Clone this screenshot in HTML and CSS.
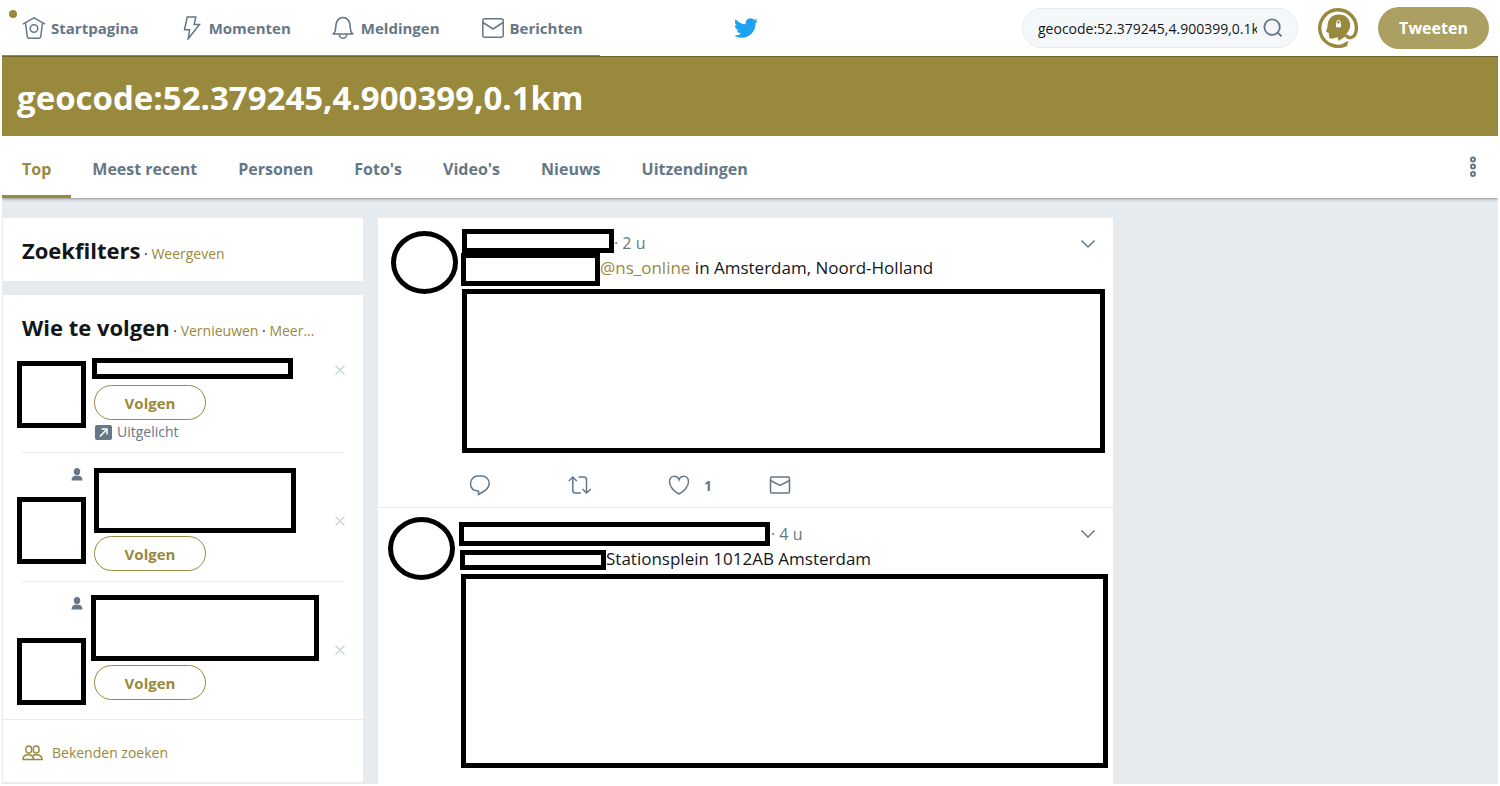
FILE: index.html
```html
<!DOCTYPE html>
<html lang="nl">
<head>
<meta charset="utf-8">
<meta name="viewport" content="width=device-width, initial-scale=1">
<title>geocode:52.379245,4.900399,0.1km</title>
<link rel="stylesheet" href="styles.css">
</head>
<body>
<svg class="sprite" aria-hidden="true">
  <symbol id="i-mail" viewBox="0 0 24 24"><rect x="1.8" y="2.8" width="20.4" height="18.4" rx="2"/><path d="M2 6.5l10 6.5 10-6.5"/></symbol>
  <symbol id="i-caret" viewBox="0 0 16 10"><path d="M1.5 1.5L8 8l6.500-6.500"/></symbol>
  <symbol id="i-close" viewBox="0 0 12 12"><path d="M1.500 1.500l9 9M10.500 1.500l-9 9"/></symbol>
  <symbol id="i-person" viewBox="0 0 12 13"><ellipse cx="6" cy="3.600" rx="3.200" ry="3.600"/><path d="M.5 12.500C.5 9.800 2 8.200 4 7.800h4c2 .4 3.500 2 3.500 4.700z"/></symbol>
</svg>
<div class="page">
  <header class="topbar">
    <nav class="mainnav" aria-label="Hoofdnavigatie">
      <a class="navlink navlink-new" href="#"><svg class="icon24" viewBox="0 0 24 24"><path d="M.8 8.200L12 1.800l11.200 6.400M3.500 7l1.700 13.200q.2 2 2 2h9.600q1.800 0 2-2L20.500 7"/><circle cx="12" cy="12.500" r="3.800"/></svg>Startpagina</a>
      <a class="navlink" href="#"><svg class="icon24" viewBox="0 0 24 24"><path d="M7.200 1h8.600l-1.600 7.500h5.300L8.200 22.800l1.400-9H4.500z"/></svg>Momenten</a>
      <a class="navlink" href="#"><svg class="icon24" viewBox="0 0 24 24"><path d="M.8 18c1.900-1 2.600-2.200 2.700-4.800C3.700 6.500 5.500 1.500 11 1.500s7.300 5 7.500 11.700c.1 2.600.8 3.800 2.700 4.800zM7.300 18.500c.3 2.300 1.600 3.800 3.700 3.800s3.400-1.500 3.700-3.800"/></svg>Meldingen</a>
      <a class="navlink" href="#"><svg class="icon24"><use href="#i-mail"/></svg>Berichten</a>
    </nav>
    <a class="logo" href="#" aria-label="Twitter"><svg viewBox="0 0 24 20"><path d="M23.950 2.570a10 10 0 0 1-2.820.78 4.960 4.960 0 0 0 2.160-2.730c-.95.560-2 .96-3.130 1.190a4.920 4.920 0 0 0-8.380 4.480C7.690 6.090 4.070 4.130 1.640 1.160a4.820 4.820 0 0 0-.67 2.480c0 1.710.87 3.210 2.190 4.100a4.900 4.900 0 0 1-2.230-.62v.06a4.920 4.920 0 0 0 3.950 4.830 5 5 0 0 1-2.210.08 4.940 4.940 0 0 0 4.600 3.420A9.870 9.870 0 0 1 0 17.540a13.990 13.990 0 0 0 7.560 2.210c9.050 0 14-7.500 14-13.980 0-.21 0-.42-.02-.63a9.940 9.940 0 0 0 2.460-2.550z"/></svg></a>
    <div class="tools">
      <form class="search" role="search">
        <input type="text" aria-label="Zoeken op Twitter" value="geocode:52.379245,4.900399,0.1km">
        <button type="button" class="search-btn" aria-label="Zoeken"><svg viewBox="0 0 22 22"><circle cx="10" cy="10" r="8.500"/><path d="M16.200 16.200l4.300 4"/></svg></button>
      </form>
      <a class="profile" href="#" aria-label="Profiel"><svg viewBox="0 0 40 40"><path class="a-ring" d="M29 36A18.300 18.300 0 1 1 37.900 24C36.500 30 30.500 31.500 28 27"/><path class="a-fill" d="M9.500 18.500C9.500 11 14 6.500 21 6.500c6.800 0 11.200 4.800 11.200 10.500 0 5.800-3.900 8-4.900 11.500l-6.800 4.500-.6-3.800-6.300 1.600c-1.900.3-2.500-.8-2.500-2.200l-.5-3.900-2-.8c-.9-.4-.7-1 0-1.900z"/><path class="a-tail" d="M25 37l5-3"/><rect class="a-white" x="18" y="15.500" width="5" height="3.800"/><path class="a-lock" d="M18.900 16v-2a1.600 1.600 0 0 1 3.200 0v2"/></svg></a>
      <button type="button" class="tweet-btn">Tweeten</button>
    </div>
  </header>

  <section class="hero"><h1>geocode:52.379245,4.900399,0.1km</h1></section>

  <nav class="tabs" aria-label="Resultaten">
    <a class="tab active" href="#">Top</a>
    <a class="tab" href="#">Meest recent</a>
    <a class="tab" href="#">Personen</a>
    <a class="tab" href="#">Foto's</a>
    <a class="tab" href="#">Video's</a>
    <a class="tab" href="#">Nieuws</a>
    <a class="tab" href="#">Uitzendingen</a>
    <button type="button" class="more" aria-label="Meer opties"><svg viewBox="0 0 8 22"><circle cx="4" cy="3.500" r="2"/><circle cx="4" cy="10.500" r="2"/><circle cx="4" cy="18" r="2"/></svg></button>
  </nav>

  <main class="main">
    <aside class="sidebar">
      <section class="card filters">
        <h2>Zoekfilters</h2><span class="links"> · <a href="#">Weergeven</a></span>
      </section>
      <section class="card">
        <div class="card-head"><h2>Wie te volgen</h2><span class="links"> · <a href="#">Vernieuwen</a> · <a href="#">Meer...</a></span></div>
        <ul class="people">
          <li class="person person-a">
            <div class="pic"><div class="mask avatar"></div></div>
            <div class="info">
              <div class="mask name"></div>
              <button type="button" class="follow">Volgen</button>
              <p class="promoted"><svg viewBox="0 0 17 15"><rect width="17" height="15" rx="2"/><path d="M5 11.500l6.500-7M6.500 4h5.500v5.500"/></svg>Uitgelicht</p>
            </div>
            <button type="button" class="close" aria-label="Verbergen"><svg><use href="#i-close"/></svg></button>
          </li>
          <li class="person person-b">
            <div class="pic"><svg class="who"><use href="#i-person"/></svg><div class="mask avatar"></div></div>
            <div class="info">
              <div class="mask name"></div>
              <button type="button" class="follow">Volgen</button>
            </div>
            <button type="button" class="close" aria-label="Verbergen"><svg><use href="#i-close"/></svg></button>
          </li>
          <li class="person person-c">
            <div class="pic"><svg class="who"><use href="#i-person"/></svg><div class="mask avatar"></div></div>
            <div class="info">
              <div class="mask name"></div>
              <button type="button" class="follow">Volgen</button>
            </div>
            <button type="button" class="close" aria-label="Verbergen"><svg><use href="#i-close"/></svg></button>
          </li>
        </ul>
        <a class="find" href="#"><svg viewBox="0 0 21 16"><ellipse cx="6.800" cy="4.500" rx="2.900" ry="3.600"/><ellipse cx="14.200" cy="4.500" rx="2.900" ry="3.600"/><path d="M1 14.500c0-3 2-4.800 5.200-4.800s5.300 1.800 5.300 4.800zM11 10.500c.9-.5 2-.8 3.300-.8 3.500 0 5.700 1.800 5.700 4.800h-8"/></svg>Bekenden zoeken</a>
      </section>
    </aside>

    <section class="timeline">
      <article class="tweet tweet-a">
        <div class="mask face"></div>
        <div class="body">
          <div class="head"><div class="mask author"></div><span class="time">· 2 u</span><button type="button" class="caret" aria-label="Meer"><svg><use href="#i-caret"/></svg></button></div>
          <div class="line"><div class="mask word"></div><p><a href="#">@ns_online</a> in Amsterdam, Noord-Holland</p></div>
          <div class="mask media"></div>
          <div class="actions">
            <button type="button" aria-label="Beantwoorden"><svg viewBox="0 0 24 24"><path d="M10.500 21.500v-3.600C5 17.700 2.500 14.500 2.500 10.700c0-4.400 3-7.700 7.500-7.700h3.500c4.500 0 7.800 3.300 7.800 7.500 0 5-4.800 7.800-10.800 11z"/></svg></button>
            <button type="button" aria-label="Retweeten"><svg viewBox="0 0 24 24"><path d="M.8 8L4.800 4l4 4M4.800 4.500v13q0 2.500 2.500 2.500h5.500M10.500 4H16q2.500 0 2.500 2.500v13M14.500 16l4 4 4.300-4"/></svg></button>
            <button type="button" aria-label="Vind ik leuk"><svg viewBox="0 0 24 24"><path d="M11 21C6 18.500 1.500 13.500 1.500 8.700c0-3.200 2-5.500 4.700-5.500 2.200 0 4 1.300 4.800 3.600.8-2.300 2.600-3.600 4.800-3.600 2.700 0 4.700 2.300 4.700 5.500C20.500 13.500 16 18.500 11 21z"/></svg><span>1</span></button>
            <button type="button" aria-label="Direct bericht"><svg viewBox="0 0 24 24"><rect x="2.500" y="4" width="19" height="16" rx="1.500"/><path d="M2.500 7.500l9.500 5 9.500-5"/></svg></button>
          </div>
        </div>
      </article>
      <article class="tweet tweet-b">
        <div class="mask face"></div>
        <div class="body">
          <div class="head"><div class="mask author"></div><span class="time">· 4 u</span><button type="button" class="caret" aria-label="Meer"><svg><use href="#i-caret"/></svg></button></div>
          <div class="line"><div class="mask word"></div><p>Stationsplein 1012AB Amsterdam</p></div>
          <div class="mask media"></div>
        </div>
      </article>
    </section>
  </main>
</div>
</body>
</html>
```
FILE: styles.css
```css
:root {
  --accent: #98893d;
  --grey: #657786;
  --ink: #14171a;
  --wash: #e6ebef;
}
* { box-sizing: border-box; }
body {
  margin: 0;
  background: #fff;
  color: var(--ink);
  font-family: "Open Sans", "Noto Sans", sans-serif;
  font-size: 15px;
}
h1, h2, p, ul { margin: 0; padding: 0; }
a { color: var(--accent); text-decoration: none; }
button { margin: 0; padding: 0; border: 0; background: none; font-family: inherit; cursor: pointer; }
svg { display: block; flex: none; fill: none; stroke: currentColor; stroke-width: 1.5; }
.sprite { display: none; }
.page { padding: 0 2px 2px; }
.mask { flex: none; background: #fff; border: 5px solid #000; }

/* Top bar */
.topbar { display: grid; grid-template-columns: 1fr auto 1fr; align-items: center; height: 56px; padding-right: 9px; }
.mainnav { display: flex; align-items: center; gap: 41px; width: 598px; height: 56px; padding-left: 20px; border-bottom: 1px solid var(--accent); }
.navlink { position: relative; display: flex; align-items: center; gap: 5px; color: var(--grey); font-size: 15px; font-weight: 700; }
.navlink-new::before { content: ""; position: absolute; left: -13px; top: -6px; width: 8px; height: 8px; border-radius: 50%; background: var(--accent); }
.icon24 { width: 24px; height: 24px; }
.logo { color: #1da1f2; }
.logo svg { width: 24px; height: 20px; fill: currentColor; stroke: none; }
.tools { display: flex; align-items: center; justify-content: flex-end; gap: 20px; }
.search { display: flex; align-items: center; gap: 6px; width: 276px; height: 40px; padding: 0 14px 0 15px; border: 1px solid var(--wash); border-radius: 20px; background: #f5f8fa; }
.search input { flex: 1; min-width: 0; padding: 0; border: 0; outline: 0; background: none; color: var(--ink); font-family: inherit; font-size: 14px; }
.search-btn { color: var(--grey); }
.search-btn svg { width: 20px; height: 20px; stroke-width: 2; }
.profile svg { width: 40px; height: 40px; stroke: none; }
.a-white { fill: #fff; }
.a-fill { fill: var(--accent); }
.profile .a-ring { stroke: var(--accent); stroke-width: 3.4; }
.profile .a-tail { stroke: var(--accent); stroke-width: 2.5; }
.profile .a-lock { stroke: #fff; stroke-width: 1; }
.tweet-btn { width: 111px; height: 42px; border-radius: 21px; background: #ac9f62; color: #fff; font-size: 16px; font-weight: 700; }

/* Query banner */
.hero { height: 80px; padding: 20px 15px; border-top: 1px solid #6f642d; background: var(--accent); }
.hero h1 { color: #fff; font-size: 33px; line-height: 41px; white-space: nowrap; }

/* Tabs */
.tabs { position: relative; display: flex; gap: 1px; height: 62px; background: #fff; box-shadow: 0 1px 3px rgba(0, 0, 0, .4); clip-path: inset(0 0 -5px 0); }
.tab { padding: 0 20px; color: var(--grey); font-size: 16px; font-weight: 700; line-height: 67px; white-space: nowrap; }
.tab.active { border-bottom: 3px solid var(--accent); color: var(--accent); }
.more { margin: 0 21px 0 auto; color: var(--grey); }
.more svg { width: 8px; height: 22px; stroke-width: 2; }

/* Columns */
.main { display: flex; align-items: flex-start; gap: 15px; padding: 20px 1px 0; background: var(--wash); }
.sidebar { display: flex; flex: 0 0 360px; flex-direction: column; gap: 14px; }
.card { background: #fff; }
.filters { padding: 16px 19px 0; height: 63px; }
.card-head { padding: 16px 19px 0; height: 58px; }
.card h2 { display: inline; font-size: 22px; line-height: 32px; }
.links { font-size: 14px; }
.people { list-style: none; }
.person { display: flex; gap: 6px; margin: 0 19px; border-bottom: 1px solid var(--wash); }
.pic { display: flex; flex: none; flex-direction: column; width: 69px; margin-left: -5px; }
.avatar { width: 69px; height: 67px; }
.who { align-self: flex-end; width: 12px; height: 13px; margin-right: 3px; color: var(--grey); fill: currentColor; stroke: none; }
.info { flex: 1; }
.follow { display: block; width: 112px; height: 35px; margin-left: 2px; border: 1px solid var(--accent); border-radius: 18px; color: var(--accent); font-size: 15px; font-weight: 700; }
.promoted { display: flex; align-items: center; gap: 5px; margin: 2px 0 0 3px; color: var(--grey); font-size: 14px; line-height: 20px; }
.promoted svg { width: 17px; height: 15px; fill: var(--grey); stroke: none; }
.promoted svg path { fill: none; stroke: #fff; }
.close { align-self: flex-start; margin-right: -2px; color: #ccd6dd; }
.close svg { width: 12px; height: 12px; }
.person-a { padding: 5px 0 10px; }
.person-a .avatar { margin-top: 3px; }
.person-a .name { width: 201px; height: 21px; margin-bottom: 6px; }
.person-a .close { margin-top: 6px; }
.person-b { padding: 15px 0 10px; }
.person-b .avatar { margin-top: 16px; }
.person-b .name { width: 202px; height: 65px; margin: 0 0 3px 2px; }
.person-b .close { margin-top: 47px; }
.person-c { padding: 13px 0 14px; border-bottom: 0; }
.person-c .who { margin-top: 2px; }
.person-c .avatar { margin-top: 28px; }
.person-c .name { width: 228px; height: 66px; margin: 0 0 4px -1px; }
.person-c .close { margin-top: 49px; }
.find { display: flex; align-items: center; gap: 9px; height: 63px; padding: 3px 19px 0; border-top: 1px solid var(--wash); font-size: 14px; }
.find svg { width: 21px; height: 16px; }

/* Timeline */
.timeline { flex: 0 1 735px; background: #fff; }
.tweet { display: flex; align-items: flex-start; }
.tweet-a { padding: 11px 8px 10px 13px; border-bottom: 1px solid var(--wash); gap: 3px; }
.tweet-b { padding: 9px 5px 16px 10px; gap: 4px; }
.face { width: 67px; height: 63px; border-radius: 50%; }
.tweet-a .face { margin-top: 2px; }
.body { flex: 1; min-width: 0; }
.head { display: flex; align-items: center; height: 24px; }
.author { height: 24px; }
.time { color: var(--grey); font-size: 16px; white-space: pre; }
.caret { margin-left: auto; color: var(--grey); }
.caret svg { width: 16px; height: 10px; }
.line { display: flex; align-items: center; }
.line p { font-size: 17px; line-height: 20px; white-space: nowrap; }
.tweet-a .author { width: 152px; margin-left: 1px; }
.tweet-a .time { padding-top: 3px; }
.tweet-a .caret { margin-right: 9px; padding-top: 5px; }
.tweet-a .word { width: 139px; height: 33px; }
.tweet-a .line { margin-bottom: 3px; }
.tweet-a .line p { padding-bottom: 4px; }
.tweet-a .media { height: 164px; margin-left: 1px; }
.tweet-b .head { margin-top: 5px; }
.tweet-b .author { width: 311px; }
.tweet-b .time { margin-left: 1px; }
.tweet-b .caret { margin-right: 12px; }
.tweet-b .line { margin: 4px 0; padding-left: 1px; }
.tweet-b .word { width: 146px; height: 20px; }
.tweet-b .line p { padding-bottom: 2px; line-height: 18px; }
.tweet-b .media { height: 194px; margin-left: 2px; }
.actions { display: grid; grid-template-columns: repeat(4, 100px); margin-top: 20px; padding-left: 7px; }
.actions button { display: flex; align-items: center; gap: 12px; height: 24px; color: var(--grey); font-size: 14px; font-weight: 700; }
.actions svg { width: 24px; height: 24px; }
```
